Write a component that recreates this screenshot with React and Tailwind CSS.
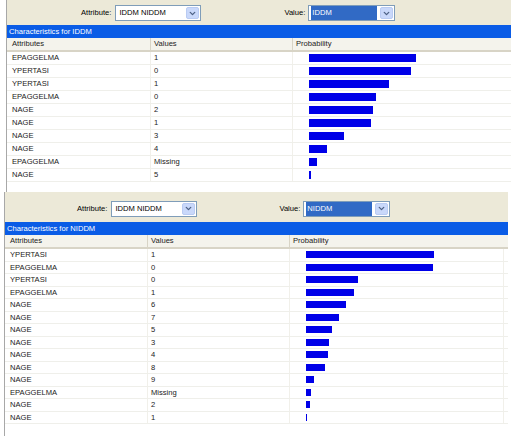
import { ChevronDown } from "lucide-react";

const topRows = [
    ["EPAGGELMA", "1", 107],
    ["YPERTASI", "0", 102],
    ["YPERTASI", "1", 80],
    ["EPAGGELMA", "0", 67],
    ["NAGE", "2", 64],
    ["NAGE", "1", 62],
    ["NAGE", "3", 35],
    ["NAGE", "4", 18],
    ["EPAGGELMA", "Missing", 8],
    ["NAGE", "5", 2],
];

const bottomRows = [
    ["YPERTASI", "1", 128],
    ["EPAGGELMA", "0", 127],
    ["YPERTASI", "0", 52],
    ["EPAGGELMA", "1", 48],
    ["NAGE", "6", 40],
    ["NAGE", "7", 33],
    ["NAGE", "5", 26],
    ["NAGE", "3", 23],
    ["NAGE", "4", 22],
    ["NAGE", "8", 19],
    ["NAGE", "9", 8],
    ["EPAGGELMA", "Missing", 5],
    ["NAGE", "2", 4],
    ["NAGE", "1", 1],
];

/* ================= COMBO BOX ================= */

function Combo({ text, selected, width }) {
    return (
        <div
            className={`flex h-[16px] items-stretch border border-[#7F9DB9] bg-white ${width}`}
        >
            <div className="flex flex-1 items-center px-[2px]">
                <span
                    className={
                        selected
                            ? "h-full flex-1 bg-[#316AC5] pl-[1px] leading-[14px] text-white"
                            : "pl-[1px] leading-[14px] text-black"
                    }
                >
                    {text}
                </span>
            </div>
            <div className="m-[1px] flex w-[13px] items-center justify-center rounded-[2px] border border-[#B9CBF3] bg-[#C9D8FA]">
                <ChevronDown size={9} strokeWidth={3.5} className="text-[#4D6185]" />
            </div>
        </div>
    );
}

/* ================= PANEL ================= */

function Panel({ name, rows, rowH, barH, cols, toolbar }) {
    return (
        <div className="flex flex-col">
            <div className={`flex items-center bg-[#ECE9D8] ${toolbar.cls}`}>
                <span className="text-black">Attribute:</span>
                <div className="ml-[4px]">
                    <Combo text="IDDM NIDDM" width="w-[86px]" />
                </div>
                <span className={`text-black ${toolbar.gap}`}>Value:</span>
                <div className="ml-[3px]">
                    <Combo text={name} selected width="w-[87px]" />
                </div>
            </div>

            <div className="flex h-[13px] items-center bg-[#0A5CE6] pl-[2px] text-white">
                Characteristics for {name}
            </div>

            <div className="flex h-[14px] border-b-2 border-[#D8D4C6] bg-[#F4F3EC]">
                <div className={`flex items-center border-r border-[#D8D4C6] pl-[5px] ${cols[0]}`}>
                    Attributes
                </div>
                <div className={`flex items-center border-r border-[#D8D4C6] pl-[3px] ${cols[1]}`}>
                    Values
                </div>
                <div className="flex items-center pl-[3px]">Probability</div>
            </div>

            {rows.map(([attr, val, w], i) => (
                <div
                    key={i}
                    className={`flex border-b border-[#EFEFEA] ${rowH}`}
                >
                    <div className={`flex items-center border-r border-[#F1F0EA] pl-[5px] ${cols[0]}`}>
                        {attr}
                    </div>
                    <div className={`flex items-center border-r border-[#F1F0EA] pl-[3px] ${cols[1]}`}>
                        {val}
                    </div>
                    <div className={`flex items-center pl-[16px] ${cols[2]}`}>
                        <div
                            className={`bg-[#0000E8] ${barH}`}
                            style={{ width: w }}
                        />
                    </div>
                </div>
            ))}
        </div>
    );
}

export default function App() {
    return (
        <div
            className="h-[444px] w-[511px] overflow-hidden bg-white text-[7.6px] text-[#222]"
            style={{ fontFamily: "'Liberation Sans', Arial, sans-serif" }}
        >
            {/* TOP */}
            <div className="ml-[6px] h-[192px] border-l border-[#A8A8A8]">
                <Panel
                    name="IDDM"
                    rows={topRows}
                    rowH="h-[13px]"
                    barH="h-[8px]"
                    cols={["w-[144px]", "w-[142px]", "flex-1"]}
                    toolbar={{ cls: "h-[25px] pl-[74px] pt-[1px]", gap: "ml-[83px]" }}
                />
            </div>

            {/* BOTTOM */}
            <div className="ml-[4px] h-[244px] w-[504px] border-l border-[#A8A8A8]">
                <Panel
                    name="NIDDM"
                    rows={bottomRows}
                    rowH="h-[12.5px]"
                    barH="h-[7px]"
                    cols={["w-[143px]", "w-[142px]", "w-[214px] border-r border-[#F1F0EA]"]}
                    toolbar={{ cls: "h-[30px] pl-[72px] pt-[3px]", gap: "ml-[82px]" }}
                />
            </div>
        </div>
    );
}
